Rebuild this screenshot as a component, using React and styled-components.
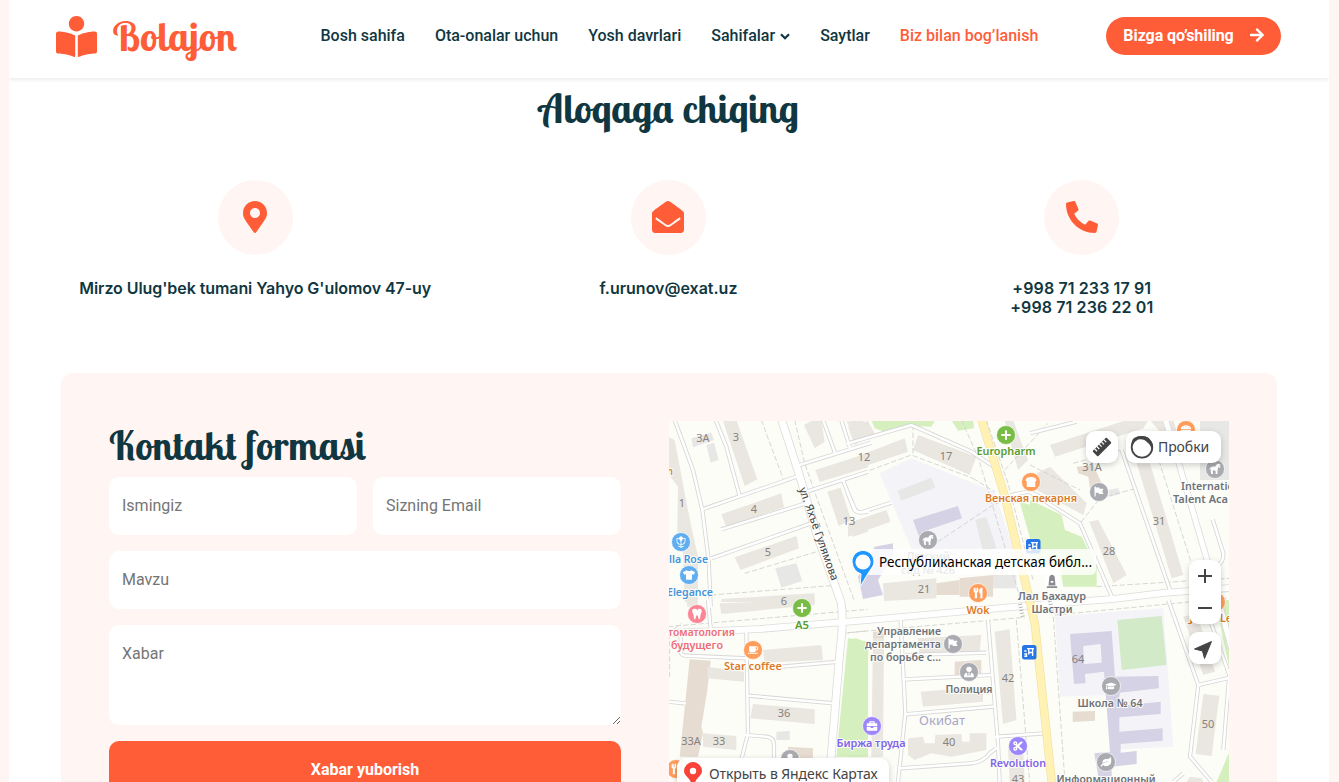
import React from "react";
import styled, { createGlobalStyle } from "styled-components";
import {
  FaBookReader, FaArrowRight, FaMapMarkerAlt, FaEnvelopeOpen, FaPhoneAlt,
  FaPlus, FaTooth, FaTshirt, FaUtensils, FaBriefcase, FaCut, FaLeaf,
  FaGraduationCap, FaHorse, FaHamburger, FaBreadSlice, FaMonument, FaCoffee, FaUserTie,
} from "react-icons/fa";
import { PiFlowerTulipFill } from "react-icons/pi";

const orange = "#ff5d38";
const navy = "#103741";
const blush = "#fff5f3";

const GlobalStyle = createGlobalStyle`
  * { box-sizing: border-box; }
  html, body { margin: 0; height: 782px; overflow: hidden; }
  body { background: ${blush}; color: ${navy}; font-family: Roboto, sans-serif; font-size: 16px; }
`;

const Page = styled.div`
  width: 1320px;
  height: 782px;
  margin-left: 9px;
  background: #fff;
  overflow: hidden;
`;

const Header = styled.header`
  display: flex;
  align-items: center;
  height: 78px;
  padding: 0 48px 6px 47px;
  background: #fff;
  box-shadow: 0 2px 4px rgba(0, 0, 0, 0.075);
`;

const Script = styled.span`
  display: inline-block;
  font-family: "Lobster Two", "Liberation Serif", serif;
  font-weight: 700;
  font-size: ${(p) => p.$size}px;
  line-height: 1.2;
  color: ${(p) => p.$color || navy};
  white-space: nowrap;
`;

const Brand = styled.a`
  display: flex;
  align-items: center;
  gap: 15.5px;
  width: 264.5px;
  color: ${orange};
  svg { flex: none; }
`;

const Nav = styled.nav`
  display: flex;
  gap: 30px;
  flex: 1;
`;

const NavLink = styled.a`
  display: flex;
  align-items: center;
  gap: 5px;
  font-weight: 500;
  line-height: 24px;
  white-space: nowrap;
  color: ${(p) => (p.$active ? orange : navy)};
`;

const JoinButton = styled.button`
  display: flex;
  align-items: center;
  justify-content: center;
  gap: 15px;
  width: 175px;
  height: 38px;
  padding: 0 0 2px 1px;
  border: 0;
  border-radius: 19px;
  background: ${orange};
  color: #fff;
  font: 700 16px Roboto, sans-serif;
  letter-spacing: -0.08px;
  white-space: nowrap;
`;

const Title = styled.h1`
  margin: 0;
  height: 102px;
  padding: 6px 0 0;
  display: flex;
  justify-content: center;
`;

const Contacts = styled.section`
  display: grid;
  grid-template-columns: repeat(3, 413.3px);
  justify-content: center;
  height: 193px;
  padding-right: 1px;
`;

const Contact = styled.div`
  display: flex;
  flex-direction: column;
  align-items: center;
  font: 560 16px/19.2px Inter, sans-serif;
  letter-spacing: ${(p) => p.$track || 0}px;
  text-align: center;
  white-space: pre-line;
`;

const Bubble = styled.div`
  display: grid;
  place-items: center;
  width: 75px;
  height: 75px;
  margin-bottom: 24px;
  padding-bottom: 1px;
  border-radius: 50%;
  background: ${blush};
  color: ${orange};
`;

const Card = styled.section`
  display: grid;
  grid-template-columns: 512px 560px;
  gap: 48px;
  width: 1216px;
  height: 500px;
  margin-left: 52px;
  padding: 48px;
  border-radius: 12px;
  background: ${blush};
`;

const Form = styled.form`
  display: grid;
  grid-template-columns: 1fr 1fr;
  grid-template-rows: 40px 58px 58px 100px 58px;
  gap: 16px;
`;

const FormTitle = styled.h2`
  grid-column: 1 / -1;
  margin: 0;
`;

const Field = styled.input`
  grid-column: ${(p) => (p.$wide ? "1 / -1" : "auto")};
  width: 100%;
  height: 58px;
  padding: 0 13px 2px;
  border: 0;
  border-radius: 10px;
  background: #fff;
  font: 400 16px Roboto, sans-serif;
  outline: none;
  &::placeholder { color: #757575; }
`;

const Message = styled(Field)`
  display: block;
  height: 100px;
  padding: 19px 13px;
  line-height: 20px;
  resize: vertical;
`;

const Submit = styled.button`
  grid-column: 1 / -1;
  padding: 0 0 2px;
  border: 0;
  border-radius: 10px;
  background: ${orange};
  color: #fff;
  font: 700 16px Roboto, sans-serif;
`;

const MapFrame = styled.div`
  position: relative;
  width: 560px;
  height: 361px;
  overflow: hidden;
`;

const Floating = styled.div`
  position: absolute;
  left: ${(p) => p.$x}px;
  top: ${(p) => p.$y}px;
  width: ${(p) => p.$w}px;
  height: ${(p) => p.$h}px;
  display: flex;
  align-items: center;
  justify-content: ${(p) => p.$justify || "center"};
  gap: ${(p) => p.$gap || 4}px;
  padding: ${(p) => p.$pad || 0};
  border-radius: 9px;
  background: #fff;
  box-shadow: 0 2px 6px rgba(0, 0, 0, 0.2);
  color: #444;
  font: 400 14px "Noto Sans", sans-serif;
  letter-spacing: -0.08px;
  white-space: nowrap;
`;

const FloatingText = styled.span`
  padding-bottom: 2px;
`;

const ZoomBox = styled(Floating)`
  flex-direction: column;
  gap: 0;
`;

const ZoomButton = styled.div`
  display: grid;
  place-items: center;
  height: 32px;
`;

// Shape coordinates are in thirds of a pixel, relative to each tile's origin.
const tiles = [
  {
    x: 668, y: 420,
    areas: {
      building: [
        "165,3 205,0 268,178 230,198", "0,50 20,60 50,220 70,320 90,410 90,546 50,546 45,400 28,330 30,200 0,160",
        "160,283 340,220 348,262 175,320", "200,412 385,348 393,385 218,450", "442,150 600,100 600,142 455,186",
        "478,215 518,203 550,300 512,318", "538,320 600,300 600,335 555,350", "160,546 160,537 440,520 440,546",
        "408,15 435,0 460,0 470,65 440,85", "535,5 585,0 592,25 560,45",
      ],
      gray: ["70,55 130,38 138,60 75,82", "115,75 138,68 152,120 128,128", "322,445 385,430 403,483 340,503"],
    },
    roads: [
      "M20 0L75 150L103 270L122 420L128 560", "M143 0L175 80L215 228", "M103 268L385 170", "M160 328L420 248",
      "M130 415L430 310", "M395 135L610 68", "M415 215L600 155", "M525 180L558 268Q565 282 600 275",
      "M465 0L500 95", "M520 0L545 80",
    ],
    dashes: ["M280 0L345 175", "M380 0L410 130L445 230L560 546", "M230 460L480 385", "M130 525L490 497"],
  },
  {
    x: 848, y: 420,
    areas: {
      campus: ["95,160 190,115 440,215 500,400 250,420 190,385"],
      park: ["70,0 262,0 250,20 175,18 110,36 80,25", "310,0 375,0 378,25 330,32", "515,245 600,270 600,412 560,405"],
      building: [
        "0,20 60,3 80,40 20,75", "0,120 170,55 180,95 0,155", "210,45 385,110 365,165 195,90",
        "0,310 115,270 128,305 0,350", "105,490 265,475 265,535 108,543", "470,3 495,0 540,120 510,150",
      ],
      gray: ["148,212 250,173 262,203 160,242", "382,300 415,290 445,385 405,395", "435,465 505,465 505,505 435,505"],
      violet: ["195,300 330,258 342,295 240,330 245,345 215,355", "80,380 135,370 135,410 90,480 105,525 45,537 30,470"],
      tan: ["265,490 335,480 335,525 265,525", "335,475 435,465 435,530 335,530"],
    },
    roads: ["M0 70L190 15L370 95L445 145", "M0 220L20 265Q24 280 45 275L130 248", "M490 225L540 215L600 240"],
    dashes: ["M0 175L190 105L375 175", "M270 365L435 255L520 220", "M340 0L390 110L500 480L520 546", "M415 0L480 190L555 480", "M375 175L440 215", "M470 150L600 10", "M195 15V100"],
  },
  {
    x: 1030, y: 420,
    areas: {
      gray: ["510,0 600,0 600,180 510,180", "235,210 265,204 270,222 240,230"],
      park: ["0,240 95,285 105,330 155,350 200,440 200,500 100,500 90,440 0,410"],
      building: [
        "60,75 290,0 355,0 340,25 75,110", "320,130 360,130 460,465 425,475", "178,305 205,300 290,465 250,490",
        "20,160 60,140 170,250 160,285 20,210", "360,0 430,0 445,50 410,60",
      ],
      tan: ["140,140 190,135 215,190 180,205 175,170 145,160"],
    },
    roads: ["M0 40L140 5", "M275 90L420 510", "M0 215L150 310L250 540", "M548 298L580 400Q582 425 560 440"],
    dashes: ["M130 130L275 90L318 205L210 235L150 310", "M380 100L500 480", "M0 135L150 210", "M200 500L600 475"],
  },
  {
    x: 668, y: 600,
    areas: {
      park: ["540,115 600,125 600,470 505,470"],
      tan: ["65,178 128,182 118,270 100,380 105,400 90,470 35,470", "360,440 435,445 435,475 360,475"],
      building: [
        "155,10 440,0 440,15 160,42", "118,200 228,215 228,245 118,235", "285,150 460,135 465,180 290,188",
        "255,312 440,328 440,372 247,355", "105,400 205,408 205,450 105,440", "55,0 90,0 90,20 58,20",
      ],
      gray: ["325,395 365,393 365,420 325,420"],
    },
    roads: [
      "M120 0L128 85", "M38 100V155Q38 166 55 167L240 175", "M235 92L240 400L220 480", "M240 287L500 310",
      "M235 405L295 410Q318 412 318 435V475", "M340 200L515 185", "M0 305L50 310",
    ],
    dashes: ["M0 80L520 35L600 28", "M530 100L600 92", "M5 100V230", "M0 100L40 70"],
  },
  {
    x: 848, y: 600,
    areas: {
      park: ["0,118 25,115 62,130 50,470 0,470"],
      building: [
        "75,115 108,115 105,470 70,470", "210,115 400,105 395,155 215,165", "218,275 405,260 405,305 225,320",
        "440,95 485,88 505,360 465,372", "180,415 225,410 230,430 260,430 262,405 340,402 342,425 365,425 365,400 415,400 415,450 310,470 250,460 200,480 180,465",
        "480,440 525,440 530,546 485,546",
      ],
      tan: ["75,95 108,95 108,115 75,115", "320,185 400,180 400,225 320,225"],
    },
    roads: [
      "M158 60L172 340L150 546", "M172 165L415 158", "M172 238L430 225", "M172 343L435 320", "M420 60L450 430L455 546",
      "M445 410L590 400", "M155 505L370 490Q405 487 425 460L445 445",
    ],
    dashes: ["M505 60L545 546", "M0 98L530 52"],
  },
  {
    x: 1030, y: 600,
    areas: {
      campus: ["75,50 250,35 400,25 430,440 240,450 230,285 90,290"],
      field: ["262,60 395,48 410,195 275,210"],
      park: ["555,0 600,0 600,215", "560,546 600,450 600,546"],
      building: ["520,282 568,287 545,468 497,462", "460,50 500,40 555,215 520,225", "470,546 480,530 515,535 520,546"],
      violet: [
        "120,102 245,93 255,230 385,228 387,265 270,278 262,318 392,305 392,342 268,352 268,395 398,385 398,422 272,432 272,458 320,453 320,492 245,500 245,530 205,530 193,460 240,455 222,215 165,222 167,250 132,252",
      ],
      hole: ["160,138 212,132 215,188 162,192"],
      tan: ["128,335 195,333 195,362 128,366"],
    },
    roads: ["M415 0L505 255L480 470L545 546", "M505 255L600 233", "M540 60L598 225L580 450", "M430 546L460 520"],
    dashes: ["M70 50L105 546", "M75 45L590 -5"],
  },
];

const areaColors = {
  campus: "#f4f4f8", park: "#d5f0be", field: "#d3eac8", building: "#eae6e0",
  gray: "#e7e7e6", violet: "#d5d2e5", tan: "#e6dcd1", hole: "#f4f4f8",
};

const mainRoads = [
  ["M781 418L800 477L817 535L841 602Q844 620 840 650L829 782", 7],
  ["M668 633L760 629L868 620L1035 605L1113 599L1163 593L1230 588", 6],
  ["M1165 418L1177 457L1210 570L1232 650", 5],
];

const houseNumbers = [
  ["3A", 703, 442], ["3", 736, 441], ["1", 682, 507], ["4", 754, 513], ["5", 768, 556], ["6", 784, 605],
  ["12", 864, 461], ["13", 849, 525], ["17", 946, 460], ["21", 924, 593], ["31A", 1092, 471], ["31", 1159, 525],
  ["28", 1109, 555], ["36", 784, 717], ["33A", 691, 745], ["33", 719, 745], ["42", 1008, 682], ["40", 949, 746],
  ["43", 1018, 783], ["64", 1078, 663], ["50", 1208, 728],
];

const c = { green: "#5a9b32", orange: "#db7b2a", gray: "#6d727a", blue: "#4294df", red: "#ed6d7b", violet: "#8063e8" };

// [text, x, baseline, anchor, color, rendered width]
const labels = [
  ["Europharm", 1006, 455, "middle", c.green, 59], ["Венская пекарня", 1031, 502, "middle", c.orange, 92],
  ["Internatio", 1181, 490, "start", c.gray, 53], ["Talent Aca", 1173, 503, "start", c.gray, 55],
  ["lla Rose", 669, 563, "start", c.blue, 39], ["Elegance", 667, 596, "start", c.blue, 46],
  ["томатология", 668, 636, "start", c.red, 67], ["будущего", 671, 649, "start", c.red, 52],
  ["A5", 802, 629, "middle", c.green, 14], ["Star coffee", 753, 670, "middle", c.orange, 58],
  ["Wok", 978, 614, "middle", c.orange, 23], ["Лал Бахадур", 1052, 600, "middle", c.gray, 68],
  ["Шастри", 1052, 613, "middle", c.gray, 41], ["Управление", 941, 635, "end", c.gray, 64],
  ["департамента", 941, 648, "end", c.gray, 76], ["по борьбе с...", 941, 661, "end", c.gray, 71],
  ["Полиция", 969, 693, "middle", c.gray, 47], ["Биржа труда", 871, 747, "middle", c.violet, 69],
  ["Revolution", 1018, 767, "middle", c.violet, 56], ["Школа № 64", 1110, 707, "middle", c.gray, 65],
  ["Информационный", 1106, 783, "middle", c.gray, 99], ["Le", 1220, 622, "start", c.orange, 12],
  ["J", 1189, 622, "start", c.orange, 5], ["n", 667, 475, "start", c.orange, 6],
];

function WavingFlag({ x, y }) {
  return <path transform={`translate(${x} ${y})`} d="M1 0H2.2V1H6V2.3H10L8.8 4.8L10 7.5H5.2V6.2H2.2V10H1Z" fill="#fff" />;
}

const markers = [
  [681, 542, "#60aef0", PiFlowerTulipFill, 13], [689, 575, "#60aef0", FaTshirt, 12], [697, 614, "#fb8694", FaTooth],
  [802, 608, "#79bd47", FaPlus], [753, 650, "#ff9e5c", FaCoffee], [1006, 435, "#79bd47", FaPlus],
  [1031, 482, "#ff9e5c", FaBreadSlice], [978, 593, "#ff9e5c", FaUtensils], [928, 540, "#a9abb0", FaHorse],
  [1099, 492, "#a9abb0", WavingFlag], [1215, 469, "#a9abb0", FaHorse], [1186, 430, "#ff9e5c", FaHamburger],
  [953, 644, "#a9abb0", WavingFlag], [969, 672, "#a9abb0", FaUserTie], [872, 726, "#9c86fa", FaBriefcase],
  [1018, 746, "#9c86fa", FaCut], [1111, 686, "#a9abb0", FaGraduationCap], [1106, 762, "#a9abb0", FaLeaf],
  [790, 759, "#a9abb0", FaUserTie], [676, 769, "#ff9e5c", FaUtensils], [1216, 602, "#ff9e5c", FaUtensils],
];

const MapArt = styled.svg`
  display: block;
  font-family: "Noto Sans", sans-serif;
`;

const PlaceLabel = styled.text`
  font-size: 11.5px;
  font-weight: 560;
  paint-order: stroke;
  stroke: #fdfdf9;
  stroke-width: 2px;
  stroke-linejoin: round;
`;

const HouseNumber = styled.text`
  font-size: 11px;
  fill: #85827e;
  text-anchor: middle;
`;

function Tiles({ render }) {
  return tiles.map((t) => (
    <g key={`${t.x}-${t.y}`} transform={`translate(${t.x} ${t.y}) scale(.33333)`}>{render(t)}</g>
  ));
}

function BusStop({ x, y }) {
  return (
    <g transform={`translate(${x - 7} ${y - 7})`}>
      <rect width="14.5" height="14.5" rx="2.5" fill="#2776e6" />
      <path d="M5 3.6H12M6.8 3.6V9.5M10.6 3.6V11M6.8 7.5H10.6M2.3 6H4.5M2.3 9H4.5V11.2H2.3" fill="none" stroke="#fff" strokeWidth="1.4" />
    </g>
  );
}

function CityMap() {
  return (
    <MapArt width="560" height="361" viewBox="669 421 560 361">
      <rect x="669" y="421" width="560" height="361" fill="#fcfdf7" />
      <Tiles render={(t) => Object.entries(t.areas).map(([kind, list]) =>
        list.map((pts) => <polygon key={pts} points={pts} fill={areaColors[kind]} />))} />
      <g fill="none" strokeDasharray="16 7" stroke="#cfcfcd" strokeWidth="2.6">
        <Tiles render={(t) => t.dashes.map((d) => <path key={d} d={d} />)} />
      </g>
      <g fill="none" stroke="#d6d6d6" strokeWidth="12.5">
        <Tiles render={(t) => t.roads.map((d) => <path key={d} d={d} />)} />
      </g>
      <g fill="none" stroke="#dcdcdb">
        {mainRoads.map(([d, w]) => <path key={d} d={d} strokeWidth={w + 1.6} />)}
      </g>
      <g fill="none" stroke="#fff" strokeWidth="7.5" strokeLinecap="square">
        <Tiles render={(t) => t.roads.map((d) => <path key={d} d={d} />)} />
      </g>
      <g fill="none" stroke="#fff">
        {mainRoads.map(([d, w]) => <path key={d} d={d} strokeWidth={w} />)}
      </g>
      <g fill="none">
        <path d="M981 418L1005 497L1030 602L1035 625L1043 700L1052 784" stroke="#f3e2a4" strokeWidth="8.6" />
        <path d="M981 418L1005 497L1030 602L1035 625L1043 700L1052 784" stroke="#fff2b4" strokeWidth="7.2" />
        <path d="M1020 604L1023 618M1050 601L1053 615" stroke="#b6b6b8" strokeWidth="4" strokeDasharray="1 2" />
      </g>
      {houseNumbers.map(([n, x, y]) => <HouseNumber key={n + x} x={x} y={y}>{n}</HouseNumber>)}
      <text x="919" y="725" fontSize="13" fill="#a9a6c9" textLength="46">Окибат</text>
      <PlaceLabel x="906" y="560" fill="#8b8e94" textLength="44">Детский</PlaceLabel>
      <PlaceLabel x="901" y="574" fill="#8b8e94" textLength="54">сад № 426</PlaceLabel>
      <text fontSize="11" fill="#3d3d3d" transform="translate(799 489) rotate(70.5)" textLength="98">ул. Яхъё Гулямова</text>
      {markers.map(([x, y, color, Icon, size = 11]) => (
        <g key={`${x}-${y}`}>
          <circle cx={x} cy={y} r="9.5" fill={color} stroke="#fff" strokeWidth=".7" />
          <Icon x={x - size / 2} y={y - size / 2} size={size} color="#fff" />
        </g>
      ))}
      <circle cx="1052" cy="581" r="8" fill="#fff" opacity=".8" />
      <FaMonument x={1045} y={574} size={14} color="#898b90" />
      <BusStop x={1033} y={546} />
      <BusStop x={1029} y={652} />
      {labels.map(([text, x, y, anchor, fill, width]) => (
        <PlaceLabel key={text} x={x} y={y} textAnchor={anchor} fill={fill} textLength={width} lengthAdjust="spacingAndGlyphs">{text}</PlaceLabel>
      ))}
      <rect x="863" y="549" width="233" height="26" rx="5" fill="#fff" opacity=".82" />
      <path d="M852 562A11 11 0 1 1 873 566Q868 573 860 587L861 574Q853 571 852 562Z" fill="#1e98ff" stroke="#fff" strokeWidth="1" />
      <circle cx="863" cy="562" r="7.6" fill="#fff" />
      <text x="879" y="567" fontSize="14" fill="#000" textLength="213" lengthAdjust="spacingAndGlyphs">Республиканская детская библ...</text>
    </MapArt>
  );
}

function RulerIcon() {
  return (
    <svg width="22" height="22" viewBox="0 0 22 22">
      <g transform="rotate(-45 11 11)">
        <rect x="1.2" y="7.2" width="19.6" height="7.6" rx="1" fill="#444" />
        <path d="M4.5 7V10.5M7.7 7V10.5M11 7V10.5M14.3 7V10.5M17.5 7V10.5" stroke="#fff" strokeWidth="1.2" />
      </g>
    </svg>
  );
}

function TrafficIcon() {
  return (
    <svg width="24" height="24" viewBox="0 0 24 24">
      <circle cx="12" cy="12.3" r="10.3" fill="none" stroke="#444" strokeWidth="1.8" />
      <path d="M1.2 11Q1.5 5 4 3Q8 .8 12 1.1Q18 1.3 21 6Q24 11 22.2 16.5Q21 10 17.5 7.5Q14 3.2 8 4.4Q4.5 6 3 10Z" fill="#444" />
    </svg>
  );
}

const contacts = [
  [FaMapMarkerAlt, "Mirzo Ulug'bek tumani Yahyo G'ulomov 47-uy", -0.07],
  [FaEnvelopeOpen, "f.urunov@exat.uz", 0],
  [FaPhoneAlt, "+998 71 233 17 91\n+998 71 236 22 01", 0.12],
];

export default function App() {
  return (
    <>
      <GlobalStyle />
      <Page>
        <Header>
          <Brand>
            <FaBookReader size={41} />
            <Script $size={40} $color={orange}>Bolajon</Script>
          </Brand>
          <Nav>
            <NavLink>Bosh sahifa</NavLink>
            <NavLink>Ota-onalar uchun</NavLink>
            <NavLink>Yosh davrlari</NavLink>
            <NavLink>Sahifalar <svg width="10" height="7" viewBox="0 0 10 7"><path d="M1 1.2L5 5.2L9 1.2" fill="none" stroke="currentColor" strokeWidth="2.2" /></svg></NavLink>
            <NavLink>Saytlar</NavLink>
            <NavLink $active>Biz bilan bog’lanish</NavLink>
          </Nav>
          <JoinButton>Bizga qo’shiling <FaArrowRight size={16} /></JoinButton>
        </Header>
        <Title><Script $size={40}>Aloqaga chiqing</Script></Title>
        <Contacts>
          {contacts.map(([Icon, text, track]) => (
            <Contact key={text} $track={track}>
              <Bubble><Icon size={32} /></Bubble>
              {text}
            </Contact>
          ))}
        </Contacts>
        <Card>
          <Form>
            <FormTitle><Script $size={40}>Kontakt formasi</Script></FormTitle>
            <Field placeholder="Ismingiz" />
            <Field placeholder="Sizning Email" />
            <Field $wide placeholder="Mavzu" />
            <Message as="textarea" $wide placeholder="Xabar" />
            <Submit type="button">Xabar yuborish</Submit>
          </Form>
          <MapFrame>
            <CityMap />
            <Floating $x={417} $y={10} $w={32} $h={32}><RulerIcon /></Floating>
            <Floating $x={457} $y={10} $w={95} $h={32} $justify="flex-start" $pad="0 4px"><TrafficIcon /><FloatingText>Пробки</FloatingText></Floating>
            <ZoomBox $x={520} $y={139} $w={32} $h={64}>
              <ZoomButton><svg width="14" height="14"><path d="M7 0V14M0 7H14" stroke="#444" strokeWidth="2" /></svg></ZoomButton>
              <ZoomButton><svg width="14" height="14"><path d="M0 7H14" stroke="#444" strokeWidth="2" /></svg></ZoomButton>
            </ZoomBox>
            <Floating $x={520} $y={211} $w={32} $h={32} $pad="3px 4px 0 0">
              <svg width="18" height="18" viewBox="0 0 18 18"><path d="M17.5 .5L10.5 17.5L8.5 10L.5 8Z" fill="#444" stroke="#444" strokeLinejoin="round" /></svg>
            </Floating>
            <Floating $x={8} $y={337} $w={212} $h={32} $gap={7} $justify="flex-start" $pad="0 7px">
              <svg width="18" height="24" viewBox="0 0 18 24"><path d="M9 0A9 9 0 0 0 0 9C0 14 7 16 8 24H10C11 16 18 14 18 9A9 9 0 0 0 9 0Z" fill="#f8433a" /><circle cx="9" cy="9" r="3.2" fill="#fff" /></svg>
              <FloatingText>Открыть в Яндекс Картах</FloatingText>
            </Floating>
          </MapFrame>
        </Card>
      </Page>
    </>
  );
}
